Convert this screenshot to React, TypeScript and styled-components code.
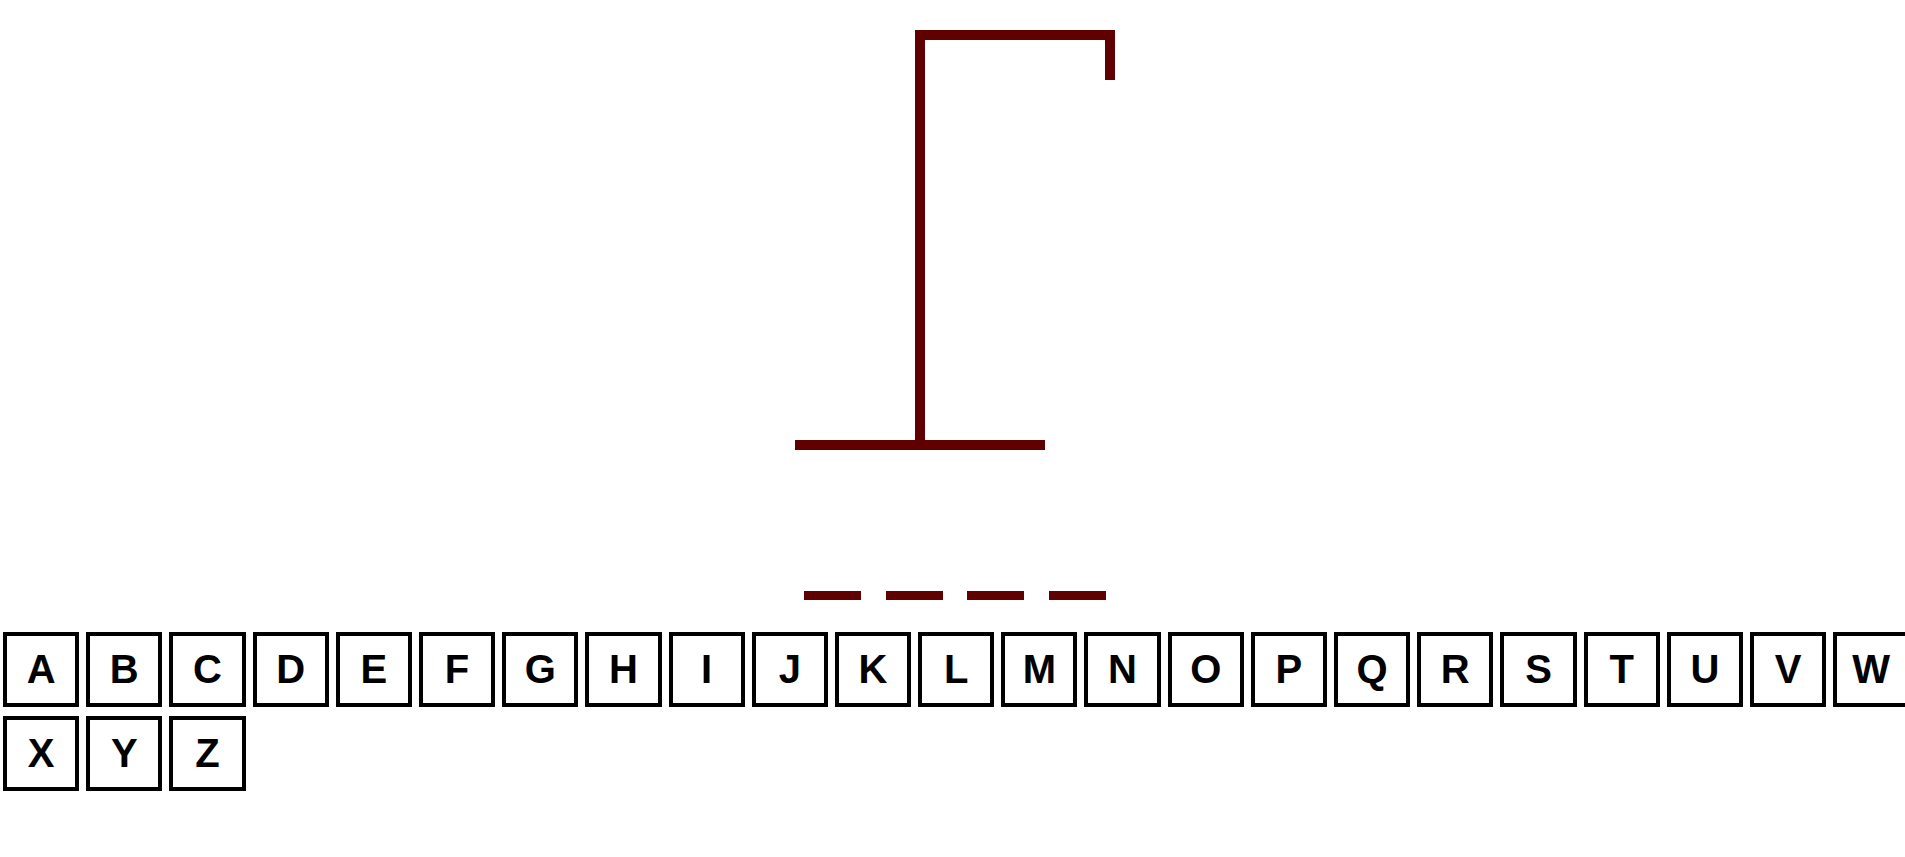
import React from "react";
import styled, { createGlobalStyle } from "styled-components";

const GlobalStyle = createGlobalStyle`
  html, body {
    margin: 0;
    padding: 0;
    background: #ffffff;
    overflow: hidden;
    font-family: "Liberation Sans", Arial, sans-serif;
  }
`;

const Page = styled.div`
  width: 1910px;
  display: flex;
  flex-direction: column;
  align-items: center;
`;

const Gallows = styled.svg`
  display: block;
  width: 320px;
  height: 450px;
`;

const Word = styled.div`
  display: flex;
  gap: 24.7px;
  margin-top: 141px;
`;

const Blank = styled.span`
  display: block;
  width: 57px;
  height: 9px;
  background: #600000;
`;

const Keyboard = styled.div`
  align-self: stretch;
  display: flex;
  flex-wrap: wrap;
  column-gap: 7px;
  row-gap: 9.5px;
  margin-top: 32px;
  padding-left: 3px;
`;

const Key = styled.button`
  box-sizing: border-box;
  width: 76.2px;
  height: 74.5px;
  margin: 0;
  padding: 0;
  border: 4px solid #000000;
  border-radius: 0;
  background: #ffffff;
  color: #000000;
  font-family: "Liberation Sans", Arial, sans-serif;
  font-weight: bold;
  font-size: 40px;
  line-height: 1;
  display: flex;
  align-items: center;
  justify-content: center;
  cursor: pointer;
`;

const letters = "ABCDEFGHIJKLMNOPQRSTUVWXYZ".split("");
const word = ["", "", "", ""];

export default function App() {
  return (
    <>
      <GlobalStyle />
      <Page>
        <Gallows viewBox="0 0 320 450">
          <g fill="#600000">
            <rect x="0" y="440" width="250" height="10" />
            <rect x="120" y="30" width="10" height="420" />
            <rect x="120" y="30" width="200" height="10" />
            <rect x="310" y="30" width="10" height="50" />
          </g>
        </Gallows>
        <Word>
          {word.map((_, i) => (
            <Blank key={i} />
          ))}
        </Word>
        <Keyboard>
          {letters.map((l) => (
            <Key key={l}>{l}</Key>
          ))}
        </Keyboard>
      </Page>
    </>
  );
}
